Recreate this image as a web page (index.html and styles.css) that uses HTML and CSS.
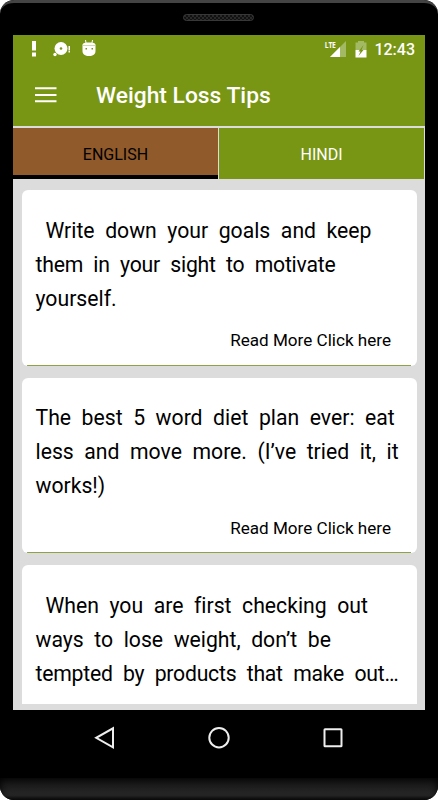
FILE: index.html
```html
<!DOCTYPE html>
<html lang="en">
<head>
    <meta charset="UTF-8">
    <meta name="viewport" content="width=device-width, initial-scale=1.0">
    <title>Weight Loss Tips</title>
    <link rel="stylesheet" href="styles.css">
</head>
<body>
    <div class="phone">
        <div class="phone-top">
            <svg class="speaker" width="72" height="8" viewBox="0 0 72 8">
                <defs>
                    <pattern id="mesh" width="4" height="4" patternUnits="userSpaceOnUse">
                        <path d="M0 0l2 2 2-2M0 4l2-2 2 2" fill="none" stroke="#333" stroke-width=".7"/>
                    </pattern>
                </defs>
                <rect x=".5" y=".5" width="70" height="6" rx="3" fill="#111"/>
                <rect x=".5" y=".5" width="70" height="6" rx="3" fill="url(#mesh)" stroke="#383838"/>
            </svg>
        </div>
        <div class="screen">
            <div class="status-bar">
                <svg width="80" height="20" viewBox="0 0 80 20" fill="#fff">
                    <path d="M5 2h4v9.500H5zM5 13.500h4v4H5z"/>
                    <circle cx="34" cy="9.500" r="6.500"/>
                    <circle cx="34" cy="9.500" r="1.300" fill="#789614"/>
                    <circle cx="28" cy="15.500" r="1.700"/>
                    <path d="M41.500 7h1.500v4.500h-1.500zM41.500 12h1.500v1.500h-1.500z"/>
                    <path d="M55.500 6c0-2 3-2.500 6.500-2.500s6.500.5 6.500 2.500v6c0 3.500-2.500 5-6.500 5s-6.500-1.500-6.500-5z"/>
                    <path d="M58.500 1l.7 4M65.500 1l-.7 4" stroke="#fff"/>
                    <path d="M56 6.500h12" stroke="#cfdbab"/>
                    <path d="M58.500 9h1.500v1.500h-1.500zM64.500 9h1.500v1.500h-1.500z" fill="#789614"/>
                </svg>
                <div class="status-right">
                    <span class="lte">LTE</span>
                    <svg width="44" height="20" viewBox="0 0 44 20">
                        <path d="M22 2v16H6z" fill="#a4b964"/>
                        <path d="M16 8v10H6z" fill="#fff"/>
                        <path d="M31.500 3.500H34V2h6v1.500h2.500V11h-11z" fill="#a4b964"/>
                        <path d="M31.500 11h11v7.500h-11z" fill="#fff"/>
                        <path d="M39.500 6l-5 6.500h2l-2 4.500 5-6h-2z" fill="#789614"/>
                    </svg>
                    <span class="clock">12:43</span>
                </div>
            </div>
            <header>
                <svg class="menu-icon" width="22" height="16" viewBox="0 0 22 16">
                    <path d="M0 1.250h21.500M0 8h21.500M0 14.250h21.500" stroke="#fff" stroke-width="2.200"/>
                </svg>
                <h1>Weight Loss Tips</h1>
            </header>
            <div class="tabs">
                <div class="tab active">ENGLISH</div>
                <div class="tab">HINDI</div>
            </div>
            <div class="tip-list">
                <div class="tip">
                    <p><span class="indent"></span>Write down your goals and keep<br><span class="tight">them in your sight to motivate</span><br>yourself.</p>
                    <div class="more">Read More Click here</div>
                </div>
                <div class="tip">
                    <p>The best 5 word diet plan ever: eat<br>less and move more. (I’ve tried it, it<br>works!)</p>
                    <div class="more">Read More Click here</div>
                </div>
                <div class="tip last">
                    <p><span class="indent"></span>When you are first checking out<br>ways to lose weight, don’t be<br><span class="tight">tempted by products that make out…</span></p>
                </div>
            </div>
        </div>
        <div class="nav-bar">
            <svg width="22" height="24" viewBox="0 0 22 24"><path d="M19 2.300v19L2.200 11.800z"/></svg>
            <svg width="24" height="24" viewBox="0 0 24 24"><circle cx="12" cy="11.700" r="9.700"/></svg>
            <svg width="22" height="24" viewBox="0 0 22 24"><rect x="2.500" y="3.200" width="17" height="17" rx=".5"/></svg>
        </div>
        <div class="phone-bottom"></div>
    </div>
</body>
</html>
```
FILE: styles.css
```css
body {
    margin: 0;
    background-color: white;
    font-family: Roboto, sans-serif;
}

/* Phone body */
.phone {
    box-sizing: border-box;
    width: 438px;
    height: 800px;
    background-color: #000;
    border-radius: 14px;
    overflow: hidden;
    display: flex;
    flex-direction: column;
}

.phone-top {
    box-sizing: border-box;
    height: 35px;
    flex-shrink: 0;
    padding-top: 11px;
    border-top: 3px solid #444;
    border-radius: 14px 14px 0 0;
    text-align: center;
    line-height: 0;
}

.screen {
    height: 675px;
    flex-shrink: 0;
    margin: 0 13px;
    background-color: #dcdcdc;
    overflow: hidden;
}

/* Status bar */
.status-bar {
    height: 28px;
    padding: 4px 10px 0 14px;
    box-sizing: border-box;
    background-color: #789614;
    color: white;
    display: flex;
    justify-content: space-between;
}

.status-right {
    display: flex;
}

.lte {
    font-family: "Open Sans", sans-serif;
    font-size: 9px;
    font-weight: bold;
    line-height: 11px;
    letter-spacing: -0.3px;
    margin-right: -13px;
    transform: scaleX(0.75);
}

.clock {
    font-size: 16px;
    font-weight: 500;
    line-height: 21px;
    margin-left: 6px;
}

/* App bar */
header {
    height: 63px;
    box-sizing: border-box;
    padding-left: 22px;
    background-color: #789614;
    color: white;
    display: flex;
    align-items: center;
}

header h1 {
    margin: 3px 0 0 39px;
    font-size: 22.8px;
    font-weight: 500;
    line-height: 30px;
}

/* Language tabs */
.tabs {
    height: 54px;
    box-sizing: border-box;
    padding: 2px 1px 1px 0;
    background-color: #dcdcdc;
    display: flex;
    gap: 1px;
}

.tab {
    flex: 1;
    box-sizing: border-box;
    background-color: #789614;
    color: white;
    font-size: 16px;
    line-height: 53px;
    text-align: center;
}

.tab.active {
    background-color: #905a2b;
    border-bottom: 4px solid #000;
    color: #000;
}

/* Tips */
.tip-list {
    padding: 10px 8.5px 6px 8.5px;
    display: flex;
    flex-direction: column;
    gap: 12px;
}

.tip {
    box-sizing: border-box;
    height: 175.5px;
    padding: 23.5px 0 0 14px;
    border-radius: 6px;
    background: linear-gradient(#8da348, #8da348) 5px 100% / calc(100% - 11px) 1px no-repeat, white;
}

.tip p {
    margin: 0;
    font-size: 21.2px;
    line-height: 34.2px;
    word-spacing: 5.3px;
    white-space: nowrap;
    font-variant-ligatures: none;
}

.tight {
    letter-spacing: -0.23px;
}

.indent {
    display: inline-block;
    width: 10px;
}

.more {
    padding: 14px 25.5px 0 0;
    font-size: 17.1px;
    line-height: 20px;
    text-align: right;
}

.tip.last {
    height: 139px;
    border-radius: 6px 6px 0 0;
    background: white;
}

/* Android buttons */
.nav-bar {
    height: 68px;
    box-sizing: border-box;
    padding: 16px 94px 0;
    display: flex;
    justify-content: space-between;
}

.nav-bar svg {
    fill: none;
    stroke: #eee;
    stroke-width: 2;
}

.phone-bottom {
    height: 22px;
    background: linear-gradient(#111, #2a2a2a 80%, #111);
    box-shadow: inset 0 0 9px #000;
}
```
